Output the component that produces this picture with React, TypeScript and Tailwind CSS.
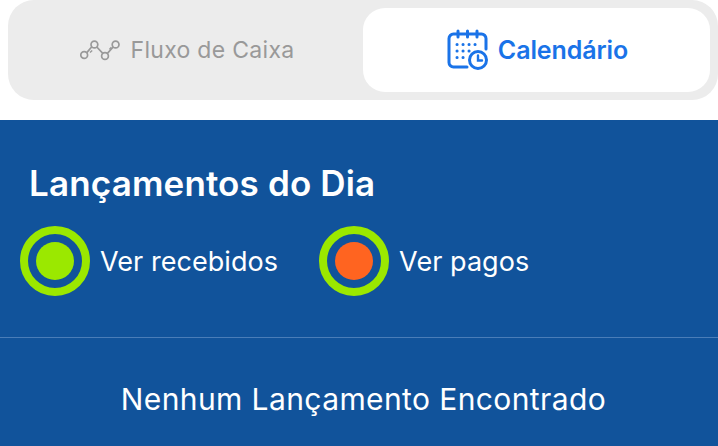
function FlowIcon() {
  return (
    <svg width="40" height="24" viewBox="0 0 40 24" fill="none" stroke="#999999" strokeWidth="1.7">
      <circle cx="4.2" cy="17" r="3.4" />
      <circle cx="14.4" cy="6.5" r="3.4" />
      <circle cx="25" cy="18" r="3.4" />
      <circle cx="35.6" cy="6.5" r="3.4" />
      <path d="M6.8 14.6 11.8 8.8M16.8 9 22.8 15.4M27.4 15.4 33.2 9" />
      <path d="M10 14.6 12.2 12.4M29.4 11.4 31.4 9.2" strokeWidth="1.4" />
    </svg>
  );
}

function CalendarIcon() {
  return (
    <svg width="42" height="42" viewBox="0 0 42 42" fill="none" stroke="#1a73e8" strokeLinecap="round">
      <path d="M20 38H6.5A4.5 4.5 0 0 1 2 33.5V9.5A4.5 4.5 0 0 1 6.5 5h28A4.5 4.5 0 0 1 39 9.5V20" strokeWidth="3" />
      <path d="M11 2v6M20.5 2v6M30 2v6" strokeWidth="3" />
      <path d="M10 15.5h.1M16 15.5h.1M22 15.5h.1M28 15.5h.1M10 22h.1M16 22h.1M22 22h.1M10 28.5h.1M16 28.5h.1" strokeWidth="3" />
      <circle cx="31" cy="31" r="8.5" strokeWidth="3" />
      <path d="M31 26.5V31.5H35" strokeWidth="2.4" />
    </svg>
  );
}

function Radio({ dot, label }: { dot: string; label: string }) {
  return (
    <div className="flex items-center gap-[10px]">
      <div className="flex h-[70px] w-[70px] items-center justify-center rounded-full border-[8px] border-[#9be800]">
        <div className={`h-[38px] w-[38px] rounded-full ${dot}`} />
      </div>
      <span className="text-[27px] leading-none tracking-[0.05px] text-white">{label}</span>
    </div>
  );
}

export default function App() {
  return (
    <div className="h-[446px] w-[718px] overflow-hidden bg-white font-['Inter',sans-serif]">
      <div className="h-[120px] pl-2">
        <div className="flex h-[100px] gap-[4px] rounded-[26px] bg-[#ececec] p-2">
          <div className="flex w-[343px] items-center justify-center gap-[11px] pr-[1px]">
            <FlowIcon />
            <span className="pt-[1px] text-[23px] tracking-[0.3px] text-[#999999]">Fluxo de Caixa</span>
          </div>
          <div className="flex w-[347px] items-center justify-center gap-[9px] rounded-[22px] bg-white pl-[2px]">
            <CalendarIcon />
            <span className="pt-[1px] text-[25px] font-semibold tracking-[-0.1px] text-[#1a73e8]">Calendário</span>
          </div>
        </div>
      </div>
      <div className="h-[326px] bg-[#11539b] text-white">
        <div className="h-[218px] border-b border-[#4a7db8] pl-5">
          <h2 className="pl-[9px] pt-[42px] text-[35px] font-semibold leading-[43px] tracking-[0.15px]">Lançamentos do Dia</h2>
          <div className="mt-[21px] flex gap-[41px]">
            <Radio dot="bg-[#9be800]" label="Ver recebidos" />
            <Radio dot="bg-[#ff6420]" label="Ver pagos" />
          </div>
        </div>
        <p className="pl-[9px] pt-[46px] text-center text-[30px] leading-none tracking-[0.4px]">Nenhum Lançamento Encontrado</p>
      </div>
    </div>
  );
}
